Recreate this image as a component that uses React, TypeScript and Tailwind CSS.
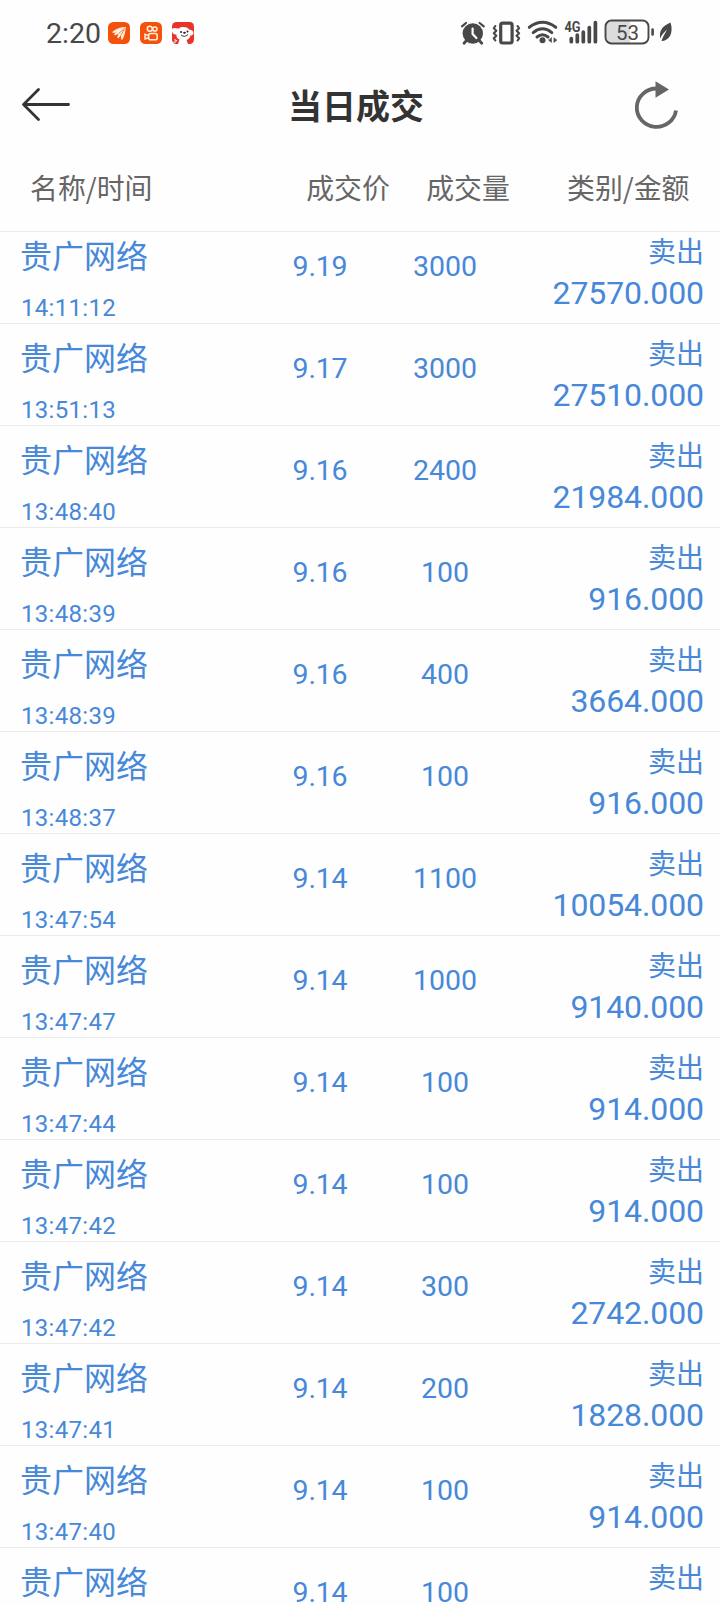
import React from "react";

type Trade = { time: string; price: string; volume: string; amount: string };

const trades: Trade[] = [
  { time: "14:11:12", price: "9.19", volume: "3000", amount: "27570.000" },
  { time: "13:51:13", price: "9.17", volume: "3000", amount: "27510.000" },
  { time: "13:48:40", price: "9.16", volume: "2400", amount: "21984.000" },
  { time: "13:48:39", price: "9.16", volume: "100", amount: "916.000" },
  { time: "13:48:39", price: "9.16", volume: "400", amount: "3664.000" },
  { time: "13:48:37", price: "9.16", volume: "100", amount: "916.000" },
  { time: "13:47:54", price: "9.14", volume: "1100", amount: "10054.000" },
  { time: "13:47:47", price: "9.14", volume: "1000", amount: "9140.000" },
  { time: "13:47:44", price: "9.14", volume: "100", amount: "914.000" },
  { time: "13:47:42", price: "9.14", volume: "100", amount: "914.000" },
  { time: "13:47:42", price: "9.14", volume: "300", amount: "2742.000" },
  { time: "13:47:41", price: "9.14", volume: "200", amount: "1828.000" },
  { time: "13:47:40", price: "9.14", volume: "100", amount: "914.000" },
  { time: "", price: "9.14", volume: "100", amount: "" },
];

function AppIcons() {
  return (
    <div className="ml-[8px] flex gap-[10px]">
      <svg width="22" height="22" viewBox="0 0 22 22">
        <rect width="22" height="22" rx="5.5" fill="#f4510b" />
        <path d="M4.500 9.800C8 6.500 12.500 5 17.800 5C17.500 9.500 16.500 14 14.500 17.500Q13.300 18 13 16.800L13 13L10.700 16Q9.300 16.500 9.200 15L10.500 11.800L7.200 13.300Q5.800 13.200 6.200 12L8 10.400L5.200 11Q4 10.800 4.500 9.800Z" fill="#fff0e0" />
        <path d="M16.500 6.500L10.500 11.500M16.300 7.500L13 13" stroke="#f4510b" strokeWidth=".7" />
      </svg>
      <svg width="22" height="22" viewBox="0 0 22 22" fill="none" stroke="#fff0e0" strokeWidth="1.500">
        <rect width="22" height="22" rx="5.500" fill="#f4510b" stroke="none" />
        <circle cx="9.800" cy="6.800" r="2.500" />
        <circle cx="14.900" cy="7" r="2.100" />
        <rect x="8.700" y="11.500" width="8.500" height="6.200" rx="1.800" />
        <path d="M8.500 13.500L5 12.300V17L8.500 15.700" />
      </svg>
      <svg width="22" height="22" viewBox="0 0 22 22">
        <rect width="22" height="22" rx="4.500" fill="#e8332a" />
        <path d="M0 7C2 5 5 7 7 6.500C9 4.500 15 4.500 17 7.500C20 8 21.500 9 21.500 11C21 13 20 13.500 18.500 13.500C18 16 16 17.500 14.500 18L16 22H6L7.500 17.500C5.500 17 4 15 4.500 12.500C2 13 0 11 0 9Z" fill="#fff" />
        <circle cx="9" cy="10" r="1" fill="#222" />
        <circle cx="15.500" cy="9.500" r="1" fill="#222" />
        <ellipse cx="12.500" cy="10.800" rx="1.400" ry="1" fill="#222" />
        <path d="M9 13Q12.500 15.800 16 12.500" stroke="#333" fill="none" />
        <path d="M2.500 17.500L5 19M1.500 20H4" stroke="#fff" strokeWidth="1.200" />
      </svg>
    </div>
  );
}

function StatusIcons() {
  return (
    <svg className="overflow-visible font-[Roboto,sans-serif]" width="216" height="28" viewBox="459 18 216 28" fill="none" stroke="#484848" strokeLinecap="round" strokeLinejoin="round">
      <circle cx="472.800" cy="33.500" r="10.200" fill="#484848" stroke="none" />
      <path d="M462 26.300L466 23M483.800 26.300L479.600 23" strokeWidth="2.200" />
      <path d="M466.500 40.500L464 43.200M479.200 40.500L481.800 43.200" strokeWidth="2.800" />
      <path d="M472.600 28.500V34L476.400 38" stroke="#fff" strokeWidth="2.200" />
      <rect x="500.700" y="23.200" width="11.400" height="19.800" rx="2" strokeWidth="3.200" />
      <path d="M495.300 26L493.800 28.300L496.300 30.800L493.800 33.300L496.300 35.800L493.800 38.300L495.300 40.500M517.600 26L519.100 28.300L516.600 30.800L519.100 33.300L516.600 35.800L519.100 38.300L517.600 40.500" strokeWidth="2.100" />
      <path d="M529.300 27.300Q542.500 17.300 555.700 27.300M533.200 32.600Q542.500 25 551.800 32.600M537 37Q542.500 32.500 548 37" strokeWidth="3" />
      <circle cx="542.500" cy="40.300" r="3" fill="#484848" stroke="none" />
      <path d="M551.500 38V42.400L548.700 40.200ZM553.900 38V42.400L556.700 40.200Z" fill="#484848" strokeWidth=".6" />
      <path d="M571.300 38.500V41.700M577.300 35.200V41.700M583.300 32.200V41.700M589.300 27.500V41.700M595.400 22.500V41.700" strokeWidth="3.700" />
      <text x="564.500" y="31.500" fontSize="14" fontWeight="700" fill="#484848" stroke="none" textLength="16" lengthAdjust="spacingAndGlyphs">4G</text>
      <path d="M611 21H630V43H611Q606 43 606 38V26Q606 21 611 21Z" fill="#dcdcdc" stroke="none" />
      <rect x="605.500" y="20.500" width="43" height="23" rx="6" strokeWidth="1.900" />
      <path d="M652.600 29.500V34.500" strokeWidth="2.600" />
      <text x="627.500" y="39.700" textAnchor="middle" fontSize="20.500" fill="#484848" stroke="none">53</text>
      <path d="M670.500 22.500C662 26 659 31 660.200 38.500C661.500 35 664 32.500 667 29.500C664.800 34 662.500 37 661.500 41C669 41 674 33 670.500 22.500Z" fill="#484848" stroke="none" />
    </svg>
  );
}

function TradeRow({ trade }: { trade: Trade }) {
  return (
    <div className="grid h-[102px] shrink-0 grid-cols-[237px_126px_124px_1fr] border-b border-[#ececec] pr-4 pl-5">
      <div>
        <div className="text-[32px] leading-[65px]">贵广网络</div>
        <div className="mt-[6px] pl-px font-[Roboto,sans-serif] text-2xl leading-[31px] tracking-[0.3px]">{trade.time}</div>
      </div>
      <div className="text-center font-[Roboto,sans-serif] text-[28.500px] leading-[89px] tracking-[-0.2px]">{trade.price}</div>
      <div className="text-center font-[Roboto,sans-serif] text-[28.500px] leading-[89px]">{trade.volume}</div>
      <div className="text-right">
        <div className="text-[28px] leading-[57px]">卖出</div>
        <div className="font-[Roboto,sans-serif] text-[32px] leading-[29px] tracking-[-0.1px]">{trade.amount}</div>
      </div>
    </div>
  );
}

export default function App() {
  return (
    <div className="flex h-[1604px] w-[720px] flex-col overflow-hidden bg-[#fefefe] font-['Noto_Sans_CJK_SC',sans-serif] text-[#666]">
      <div className="flex h-16 shrink-0 items-center justify-between pr-[45px] pl-[46px] text-[#484848]">
        <div className="flex items-center pt-[2px]">
          <span className="w-[54px] pt-[2px] font-[Roboto,sans-serif] text-[28.500px] leading-[30px] whitespace-nowrap">2:20</span>
          <AppIcons />
        </div>
        <StatusIcons />
      </div>
      <header className="grid h-[78px] shrink-0 grid-cols-[120px_1fr_120px] text-[#333]">
        <svg className="mt-[23px] ml-[21px]" width="50" height="36" viewBox="0 0 50 36" fill="none" stroke="#333" strokeWidth="2.800" strokeLinecap="round" strokeLinejoin="round">
          <path d="M17.500 2.500L2.500 17.500L17.500 32.500M3 17.500H47.500" />
        </svg>
        <h1 className="pr-[8px] text-center text-[34px] leading-[81px] font-bold">当日成交</h1>
        <svg className="mt-[16px] ml-[32px]" width="50" height="50" viewBox="632 80 50 50">
          <path d="M656.500 88.500A19.700 19.200 0 1 0 676 110.500" fill="none" stroke="#666" strokeWidth="3.800" />
          <path d="M655.500 81.300L669 89.500L655.500 97.800Z" fill="#666" />
        </svg>
      </header>
      <div className="grid h-[89px] shrink-0 grid-cols-[256px_124px_116px_1fr] pl-[30px] text-[27.900px] leading-[91px]">
        <span>名称/时间</span>
        <span className="text-center">成交价</span>
        <span className="text-center">成交量</span>
        <span className="pl-[41px]">类别/金额</span>
      </div>
      <main className="flex min-h-0 flex-1 flex-col border-t border-[#ececec] text-[#4788d8]">
        <div className="-mt-[10px] flex flex-col">
          {trades.map((trade, i) => (
            <TradeRow key={i} trade={trade} />
          ))}
        </div>
      </main>
    </div>
  );
}
